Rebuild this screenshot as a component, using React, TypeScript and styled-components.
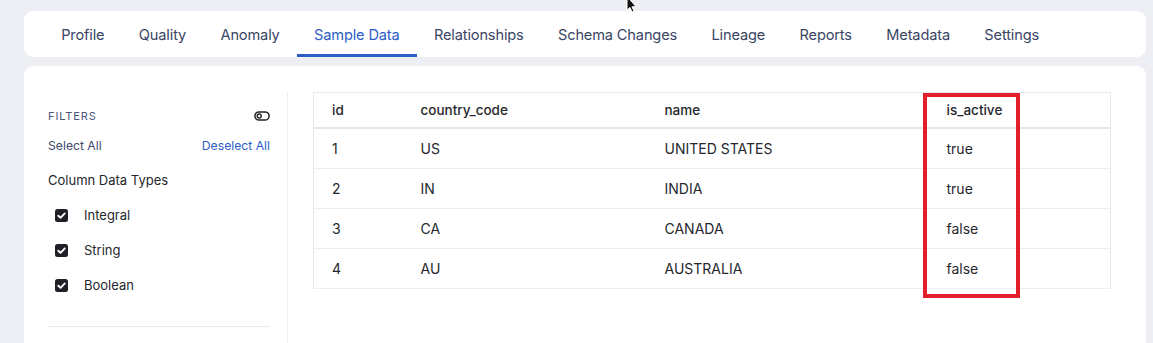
import React, { useState } from 'react';
import styled, { createGlobalStyle } from 'styled-components';

const tabs = ['Profile', 'Quality', 'Anomaly', 'Sample Data', 'Relationships', 'Schema Changes', 'Lineage', 'Reports', 'Metadata', 'Settings'];

const rows = [
    { id: 1, code: 'US', name: 'UNITED STATES', active: 'true' },
    { id: 2, code: 'IN', name: 'INDIA', active: 'true' },
    { id: 3, code: 'CA', name: 'CANADA', active: 'false' },
    { id: 4, code: 'AU', name: 'AUSTRALIA', active: 'false' },
];

const types = ['Integral', 'String', 'Boolean'];

const Check = () => (
    <svg width="13" height="13" viewBox="0 0 13 13">
        <rect x="0" y="0" width="13" height="13" rx="2.5" fill="#1f2126" />
        <path d="M3.3 6.7 L5.5 8.8 L9.8 4.4" stroke="#fff" strokeWidth="1.9" fill="none" strokeLinecap="round" strokeLinejoin="round" />
    </svg>
);

const ToggleIcon = () => (
    <svg width="16" height="10" viewBox="0 0 16 10">
        <rect x="0.9" y="0.9" width="14.2" height="8.2" rx="4.1" stroke="#222" strokeWidth="1.5" fill="none" />
        <circle cx="5.2" cy="5" r="2" stroke="#222" strokeWidth="1.4" fill="none" />
    </svg>
);

const Cursor = () => (
    <svg width="12" height="14" viewBox="0 0 12 14">
        <path d="M1 -4 L1 10 L4 7.5 L6 12 L8 11 L6 6.8 L10 6.8 Z" fill="#111" stroke="#fff" strokeWidth="1" />
    </svg>
);

export default function App() {
    const [active, setActive] = useState('Sample Data');

    return (
        <Page>
            <GlobalStyle />
            <CursorMark><Cursor /></CursorMark>
            <TabCard>
                {tabs.map(t => (
                    <Tab key={t} $active={t === active} onClick={() => setActive(t)}>{t}</Tab>
                ))}
            </TabCard>
            <MainCard>
                <Sidebar>
                    <FilterHead>
                        <FilterTitle>FILTERS</FilterTitle>
                        <ToggleIcon />
                    </FilterHead>
                    <SelectRow>
                        <LinkText>Select All</LinkText>
                        <LinkText $blue>Deselect All</LinkText>
                    </SelectRow>
                    <GroupTitle>Column Data Types</GroupTitle>
                    {types.map(t => (
                        <CheckRow key={t}>
                            <Check />
                            <span>{t}</span>
                        </CheckRow>
                    ))}
                    <Divider />
                </Sidebar>
                <TableWrap>
                    <DataTable>
                        <colgroup>
                            <col style={{ width: 89 }} />
                            <col style={{ width: 244 }} />
                            <col style={{ width: 282 }} />
                            <col />
                        </colgroup>
                        <thead>
                            <tr>
                                <Th>id</Th>
                                <Th>country_code</Th>
                                <Th>name</Th>
                                <Th>is_active</Th>
                            </tr>
                        </thead>
                        <tbody>
                            {rows.map(r => (
                                <tr key={r.id}>
                                    <Td>{r.id}</Td>
                                    <Td>{r.code}</Td>
                                    <Td>{r.name}</Td>
                                    <Td>{r.active}</Td>
                                </tr>
                            ))}
                        </tbody>
                    </DataTable>
                    <Highlight />
                </TableWrap>
            </MainCard>
        </Page>
    );
}

const GlobalStyle = createGlobalStyle`
  html, body {
    margin: 0;
    background: #edeff4;
    font-family: Inter, "Noto Sans", sans-serif;
  }
`;

const Page = styled.div`
  position: relative;
  height: 343px;
  overflow: hidden;
  padding: 11px 7px 0 24px;
  box-sizing: border-box;
`;

const CursorMark = styled.div`
  position: absolute;
  left: 626px;
  top: 0;
  line-height: 0;
`;

const TabCard = styled.div`
  display: flex;
  align-items: stretch;
  height: 46px;
  background: #fff;
  border-radius: 9px;
  padding: 0 0 0 20px;
  box-sizing: border-box;
`;

const Tab = styled.div<{ $active?: boolean }>`
  display: flex;
  align-items: center;
  padding: 5px 17.2px 0;
  font-size: 14.6px;
  letter-spacing: -0.15px;
  color: ${p => (p.$active ? '#2c5cc5' : '#3a4565')};
  border-bottom: 3px solid ${p => (p.$active ? '#2c5cc5' : 'transparent')};
  cursor: pointer;
  white-space: nowrap;
`;

const MainCard = styled.div`
  display: flex;
  align-items: flex-start;
  margin-top: 9px;
  height: 300px;
  background: #fff;
  border-radius: 9px 9px 0 0;
  padding: 26px 35px 0 24px;
  box-sizing: border-box;
`;

const Sidebar = styled.div`
  width: 240px;
  flex: none;
  align-self: stretch;
  padding: 15px 17px 0 0;
  box-sizing: border-box;
  border-right: 1px solid #eceef2;
`;

const FilterHead = styled.div`
  display: flex;
  justify-content: space-between;
  align-items: center;
  height: 18px;
`;

const FilterTitle = styled.span`
  font-size: 11px;
  letter-spacing: 0.9px;
  color: #4b5678;
`;

const SelectRow = styled.div`
  display: flex;
  justify-content: space-between;
  margin-top: 11px;
  height: 18px;
  align-items: center;
`;

const LinkText = styled.span<{ $blue?: boolean }>`
  font-size: 12.2px;
  color: ${p => (p.$blue ? '#2c5cc5' : '#3d4a6d')};
  cursor: pointer;
`;

const GroupTitle = styled.div`
  margin-top: 17px;
  height: 18px;
  line-height: 18px;
  font-size: 13px;
  color: #25272c;
`;

const CheckRow = styled.div`
  display: flex;
  align-items: center;
  gap: 16px;
  padding-left: 7px;
  margin-top: 17px;
  height: 18px;
  font-size: 13px;
  color: #25272c;

  svg {
    flex: none;
  }
`;

const Divider = styled.div`
  margin-top: 32px;
  height: 1px;
  background: #e7e9ee;
`;

const TableWrap = styled.div`
  position: relative;
  flex: 1;
  margin-left: 25px;
`;

const DataTable = styled.table`
  width: 100%;
  table-layout: fixed;
  border-collapse: collapse;
  border: 1px solid #e6e9ee;
  font-size: 14px;
  color: #25272c;
`;

const Th = styled.th`
  height: 34px;
  padding: 0 0 0 18px;
  text-align: left;
  font-weight: 500;
  font-size: 13.5px;
  border-bottom: 2px solid #e3e6ec;
`;

const Td = styled.td`
  height: 39px;
  padding: 0 0 0 18px;
  border-bottom: 1px solid #eceef2;
`;

const Highlight = styled.div`
  position: absolute;
  left: 610px;
  top: 1px;
  width: 97px;
  height: 205px;
  box-sizing: border-box;
  border: 4px solid #e21f2a;
  pointer-events: none;
`;
